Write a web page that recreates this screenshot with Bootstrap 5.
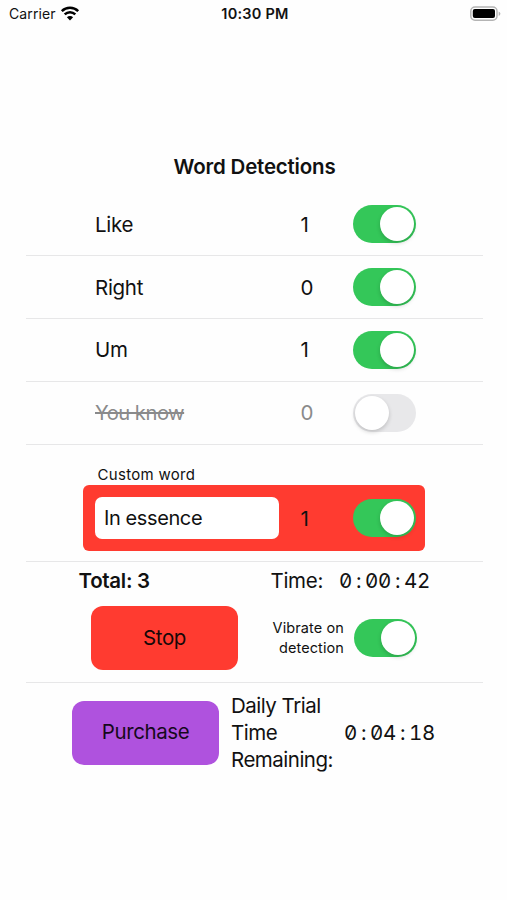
<!DOCTYPE html>
<html lang="en">
<head>
<meta charset="utf-8">
<meta name="viewport" content="width=device-width, initial-scale=1">
<title>Word Detections</title>
<link href="https://cdn.jsdelivr.net/npm/bootstrap@5.3.0/dist/css/bootstrap.min.css" rel="stylesheet">
<style>
body{font-family:Inter,"Liberation Sans",sans-serif;font-size:20.5px;line-height:27px;color:#111;background:#fefefe;height:900px;overflow:hidden;letter-spacing:-.3px}
.status-bar{height:27px;padding:0 6px 0 9px;font-size:14px;line-height:27px;letter-spacing:.1px}
.status-time{font-size:14.5px;letter-spacing:.25px}
.status-side{flex:1 1 0}
.screen{padding:0 24px 0 26px}
.screen-title{margin-top:126px;height:40.5px;line-height:27px;font-size:20.5px;letter-spacing:-.2px}
.word-row{height:62.75px;border-bottom:1px solid #e7e7e8;padding:0 67.5px 0 69px}
.word-off{color:#8a8a8b}
.word-off .word-name{font-size:20.2px;letter-spacing:-.5px}
.word-count{width:52.5px}
.ios-switch.form-check-input{appearance:none;flex:none;width:62.5px;height:38px;margin:0;border:0;border-radius:19px;background:#e8e8ea;display:block;padding:2px;box-shadow:none}
.ios-switch::before{content:"";display:block;width:34px;height:34px;border-radius:50%;background:#fff;box-shadow:0 2px 4px rgba(0,0,0,.18)}
.ios-switch.form-check-input:checked{background:#34c759}
.ios-switch:checked::before{margin-left:24.5px}
.custom-section{height:117px;border-bottom:1px solid #e7e7e8;padding:20.5px 58px 0 57px}
.custom-label{font-size:15px;line-height:20px;padding-left:14.5px;letter-spacing:.3px}
.custom-box{height:66px;border-radius:6px;background:#ff3b30;padding:0 9.5px 0 12px}
.custom-input.form-control{width:183.5px;height:42px;border:0;border-radius:7px;padding:0 9px;font-size:20px;color:#111;letter-spacing:-.4px}
.controls{height:121.5px;border-bottom:1px solid #e7e7e8;padding:5px 53px 0 52.5px}
.clock{font-feature-settings:"tnum","zero";letter-spacing:-.3px}
.clock b{display:inline-block;width:13px;text-align:center;font-weight:400}
.big-btn.btn{width:147px;height:64px;border-radius:12px;font-size:20.5px;color:#160808;border:0;letter-spacing:-.4px}
.stop-btn.btn{background:#ff3b30;margin-left:12.5px}
.buy-btn.btn{background:#af52de;color:#16091c}
.vibrate{font-size:14.5px;line-height:20px;width:80px;margin-right:10px;letter-spacing:.1px}
.vibrate-switch{margin-right:13.5px}
.controls-row{padding-top:12.5px}
.trial{padding:9px 0 0 46px}
.trial-text{width:113px;margin-left:12px;letter-spacing:-.5px}
</style>
</head>
<body>
<header class="status-bar d-flex align-items-center">
  <div class="status-side d-flex align-items-center">
    <span>Carrier</span>
    <svg class="ms-1" width="20" height="15" viewBox="0 0 20 15" fill="none" stroke="#000" stroke-width="2.5"><path d="M1.8 5.2a11.7 11.7 0 0 1 16.4 0M4.7 8.4a7.6 7.6 0 0 1 10.6 0"/><path d="M10 14.4 6.9 11.2a4.4 4.4 0 0 1 6.2 0Z" fill="#000" stroke="none"/></svg>
  </div>
  <span class="status-time fw-semibold">10:30 PM</span>
  <div class="status-side d-flex justify-content-end">
    <svg width="31" height="16" viewBox="0 0 31 16"><rect x=".8" y="1" width="26.2" height="13.2" rx="4.2" fill="#fff" stroke="#b4b4b4" stroke-width="1.5"/><rect x="2.8" y="3.1" width="22.2" height="9" rx="2" fill="#000"/><path d="M28.7 5.4q1.7.8 1.7 2.3t-1.7 2.3z" fill="#b4b4b4"/></svg>
  </div>
</header>
<main class="screen">
  <h1 class="screen-title fw-semibold text-center mb-0">Word Detections</h1>
  <div class="word-row d-flex align-items-center"><span class="word-name">Like</span><span class="word-count ms-auto">1</span><input class="form-check-input ios-switch" type="checkbox" role="switch" aria-label="Like" checked></div>
  <div class="word-row d-flex align-items-center"><span class="word-name">Right</span><span class="word-count ms-auto">0</span><input class="form-check-input ios-switch" type="checkbox" role="switch" aria-label="Right" checked></div>
  <div class="word-row d-flex align-items-center"><span class="word-name">Um</span><span class="word-count ms-auto">1</span><input class="form-check-input ios-switch" type="checkbox" role="switch" aria-label="Um" checked></div>
  <div class="word-row word-off d-flex align-items-center"><span class="word-name text-decoration-line-through">You know</span><span class="word-count ms-auto">0</span><input class="form-check-input ios-switch" type="checkbox" role="switch" aria-label="You know"></div>

  <section class="custom-section">
    <label class="custom-label d-block" for="customWord">Custom word</label>
    <div class="custom-box d-flex align-items-center">
      <input class="form-control custom-input" id="customWord" type="text" value="In essence">
      <span class="word-count ms-auto">1</span>
      <input class="form-check-input ios-switch" type="checkbox" role="switch" aria-label="Custom word" checked>
    </div>
  </section>

  <section class="controls">
    <div class="d-flex justify-content-between">
      <span class="fw-semibold">Total: 3</span>
      <span class="d-flex"><span class="me-3">Time:</span><span class="clock">0<b>:</b>00<b>:</b>42</span></span>
    </div>
    <div class="controls-row d-flex align-items-center">
      <button class="btn big-btn stop-btn" type="button">Stop</button>
      <label class="vibrate text-end ms-auto" for="vibrate">Vibrate on detection</label>
      <div class="vibrate-switch"><input class="form-check-input ios-switch" id="vibrate" type="checkbox" role="switch" checked></div>
    </div>
  </section>

  <section class="trial d-flex align-items-center">
    <button class="btn big-btn buy-btn" type="button">Purchase</button>
    <span class="trial-text">Daily Trial Time Remaining:</span>
    <span class="clock">0<b>:</b>04<b>:</b>18</span>
  </section>
</main>
<script src="https://cdn.jsdelivr.net/npm/bootstrap@5.3.0/dist/js/bootstrap.bundle.min.js"></script>
</body>
</html>
